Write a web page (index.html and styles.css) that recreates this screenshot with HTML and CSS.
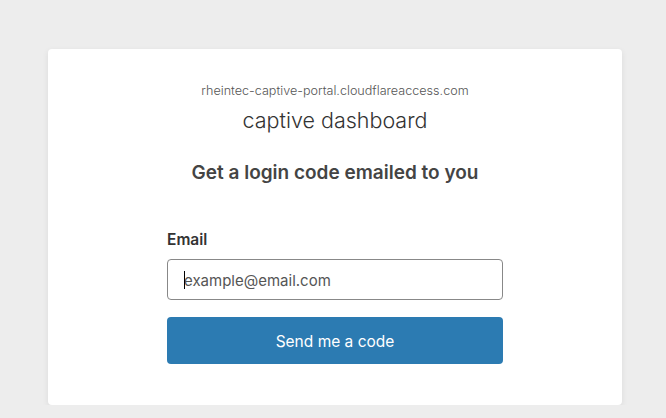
FILE: index.html
```html
<!DOCTYPE html>
<html lang="en">
<head>
    <meta charset="UTF-8">
    <meta name="viewport" content="width=device-width, initial-scale=1.0">
    <title>captive dashboard</title>
    <link rel="stylesheet" href="styles.css">
</head>
<body>
    <div class="card">
        <div class="domain">rheintec-captive-portal.cloudflareaccess.com</div>
        <h1 class="app-name">captive dashboard</h1>
        <h2 class="heading">Get a login code emailed to you</h2>
        <form class="login-form">
            <label for="email" class="field-label">Email</label>
            <div class="input-wrap">
                <input type="email" id="email" placeholder="example@email.com">
                <span class="caret"></span>
            </div>
            <button type="button" class="submit">Send me a code</button>
        </form>
    </div>
</body>
</html>
```

FILE: styles.css
```css
body {
    margin: 0;
    background: #ededed;
    font-family: Inter, "Liberation Sans", Arial, sans-serif;
    padding: 49px 44px 0 48px;
}
.card {
    background: #fff;
    border-radius: 4px;
    box-shadow: 0 2px 6px rgba(0,0,0,0.08);
    height: 356px;
    box-sizing: border-box;
    padding-top: 34px;
    text-align: center;
}
.domain {
    font-size: 12.6px;
    font-weight: 300;
    color: #555;
    line-height: 16px;
}
.app-name {
    margin: 7px 0 0;
    font-size: 21.5px;
    font-weight: 300;
    color: #333;
    line-height: 28px;
}
.heading {
    margin: 27px 0 0;
    font-size: 19px;
    font-weight: 600;
    color: #444;
    line-height: 24px;
}
.login-form {
    width: 336px;
    margin: 45px auto 0;
    text-align: left;
}
.field-label {
    display: block;
    font-size: 15.5px;
    font-weight: 600;
    color: #333;
    line-height: 20px;
    margin-bottom: 9px;
}
.input-wrap {
    position: relative;
}
input {
    width: 100%;
    box-sizing: border-box;
    height: 41px;
    border: 1px solid #888;
    border-radius: 4px;
    padding: 2px 16px 0;
    font-family: inherit;
    font-size: 15px;
    color: #333;
}
input::placeholder {
    color: #555;
}
.caret {
    position: absolute;
    left: 17px;
    top: 12px;
    width: 1px;
    height: 18px;
    background: #000;
}
.submit {
    display: block;
    width: 100%;
    height: 47px;
    margin-top: 17px;
    padding-top: 2px;
    background: #2c7bb2;
    color: #fff;
    border: none;
    border-radius: 4px;
    font-family: inherit;
    font-size: 15.5px;
    cursor: pointer;
}
```
